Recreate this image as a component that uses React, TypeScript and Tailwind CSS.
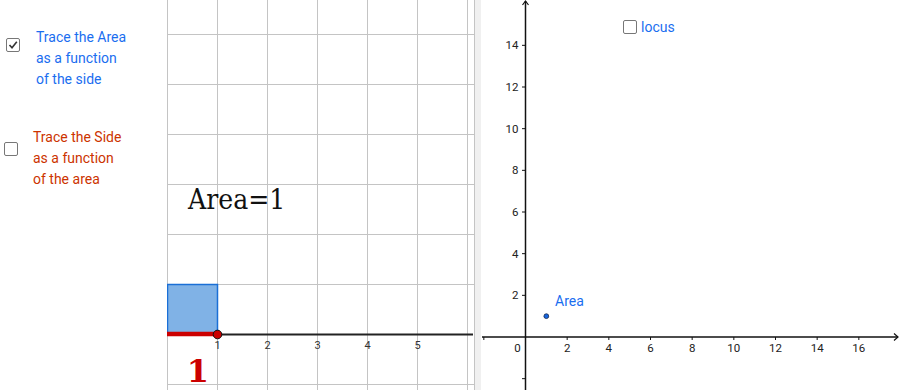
import React from "react";

const U = 125 / 6; // px per unit on the right graph
const OX = 44.5;
const OY = 337;

function Box({ checked }: { checked?: boolean }) {
  return (
    <div className="w-[14px] h-[14px] shrink-0 border-[1.5px] border-[#777] rounded-[2px] bg-white flex items-center justify-center">
      {checked && (
        <svg width="10" height="10" viewBox="0 0 10 10">
          <polyline points="1.5,5 4,7.8 8.8,1.8" fill="none" stroke="#333" strokeWidth="1.6" />
        </svg>
      )}
    </div>
  );
}

function LeftGraph() {
  const vs = [0, 50, 100, 150, 200, 250, 300];
  const hs = [34, 84, 134, 184, 234, 284, 384];
  return (
    <svg width="307" height="390" className="block shrink-0">
      {vs.map((x) => (
        <line key={"v" + x} x1={x + 0.5} y1={0} x2={x + 0.5} y2={390} stroke="#c4c4c4" strokeWidth="1" />
      ))}
      {hs.map((y) => (
        <line key={"h" + y} x1={0} y1={y + 0.5} x2={307} y2={y + 0.5} stroke="#c4c4c4" strokeWidth="1" />
      ))}
      <line x1={0} y1={334.5} x2={306} y2={334.5} stroke="#222" strokeWidth="2" />
      <rect x={0.5} y={284.5} width={50} height={50} fill="#80b2e6" stroke="#1a6fd6" strokeWidth="1.5" />
      <line x1={-2} y1={334} x2={50} y2={334} stroke="#cc0000" strokeWidth="4.5" />
      <circle cx={50.5} cy={334.5} r={4.3} fill="#cc0000" stroke="#111" strokeWidth="1" />
      {[1, 2, 3, 4, 5].map((n) => (
        <text key={n} x={n * 50 + 0.5} y={349} textAnchor="middle" fontSize="11" fill="#333">
          {n}
        </text>
      ))}
      <text x={21} y={209} fontSize="28" fill="#111" className="font-['DejaVu_Serif_Condensed','DejaVu_Serif',serif]">
        Area=1
      </text>
      <text x={31} y={382} textAnchor="middle" fontSize="32" fontWeight="bold" fill="#cc0000" className="font-['DejaVu_Serif',serif]">
        1
      </text>
    </svg>
  );
}

function RightGraph() {
  const ys = [2, 4, 6, 8, 10, 12, 14];
  const xs = [2, 4, 6, 8, 10, 12, 14, 16];
  return (
    <div className="relative w-[419px] h-[390px] shrink-0">
      <svg width="419" height="390" className="block">
        <line x1={OX} y1={390} x2={OX} y2={1} stroke="#111" strokeWidth="1.5" />
        <polyline points={`${OX - 3},5 ${OX},1 ${OX + 3},5`} fill="none" stroke="#111" strokeWidth="1.2" />
        <line x1={1} y1={OY} x2={417} y2={OY} stroke="#111" strokeWidth="1.5" />
        <polyline points={`413,${OY - 3.5} 417,${OY} 413,${OY + 3.5}`} fill="none" stroke="#111" strokeWidth="1.2" />
        {ys.map((k) => {
          const y = OY - k * U;
          return (
            <g key={"y" + k}>
              <line x1={OX - 3.5} y1={y} x2={OX} y2={y} stroke="#111" strokeWidth="1" />
              <text x={OX - 7} y={y + 4} textAnchor="end" fontSize="11.5" fill="#222">
                {k}
              </text>
            </g>
          );
        })}
        <line x1={OX - 3.5} y1={OY + 2 * U} x2={OX} y2={OY + 2 * U} stroke="#111" strokeWidth="1" />
        <line x1={OX - 2 * U} y1={OY} x2={OX - 2 * U} y2={OY + 3} stroke="#111" strokeWidth="1" />
        {xs.map((k) => {
          const x = OX + k * U;
          return (
            <g key={"x" + k}>
              <line x1={x} y1={OY} x2={x} y2={OY + 3} stroke="#111" strokeWidth="1" />
              <text x={x} y={OY + 15} textAnchor="middle" fontSize="11.5" fill="#222">
                {k}
              </text>
            </g>
          );
        })}
        <text x={OX - 8} y={OY + 15} textAnchor="middle" fontSize="11.5" fill="#222">
          0
        </text>
        <circle cx={OX + U} cy={OY - U} r={2.4} fill="#1565e0" stroke="#1b2a4a" strokeWidth="0.8" />
        <text x={74} y={306} fontSize="14" fill="#1a6ef0">
          Area
        </text>
      </svg>
      <div className="absolute left-[142px] top-[20px] flex items-center gap-[4px]">
        <Box />
        <span className="text-[14px] leading-[14px] text-[#1a6ef0]">locus</span>
      </div>
    </div>
  );
}

export default function App() {
  return (
    <div className="w-[900px] h-[390px] bg-white flex overflow-hidden font-['Roboto',sans-serif]">
      <div className="w-[167px] h-full shrink-0 pt-[27px] flex flex-col">
        <div className="flex items-start pl-[6px]">
          <div className="mt-[11px]">
            <Box checked />
          </div>
          <div className="ml-[16px] text-[14px] leading-[21px] text-[#1a6ef0]">
            <div>Trace the Area</div>
            <div>as a function</div>
            <div>of the side</div>
          </div>
        </div>
        <div className="flex items-start pl-[4px] mt-[37px]">
          <div className="mt-[15px]">
            <Box />
          </div>
          <div className="ml-[15px] text-[14px] leading-[21px] text-[#cc3300]">
            <div>Trace the Side</div>
            <div>as a function</div>
            <div>of the area</div>
          </div>
        </div>
      </div>
      <LeftGraph />
      <div className="w-px h-full bg-[#c4c4c4] shrink-0" />
      <div className="w-[6px] h-full bg-[#f0f0f0] shrink-0" />
      <RightGraph />
    </div>
  );
}
